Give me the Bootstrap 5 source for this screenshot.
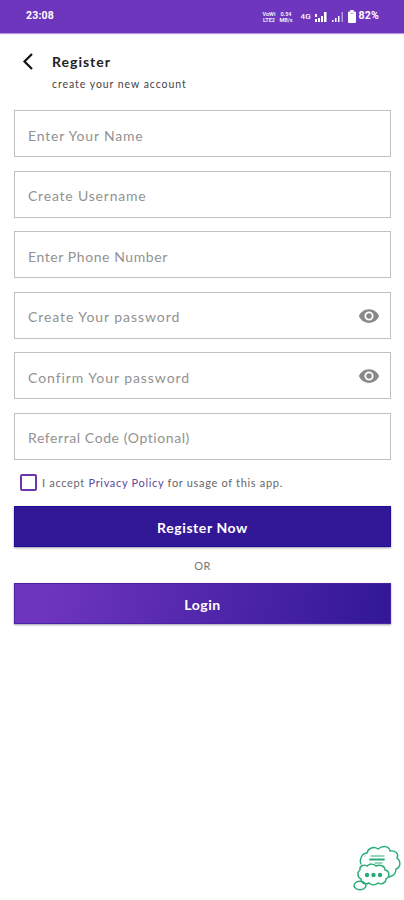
<!DOCTYPE html>
<html lang="en">
<head>
<meta charset="utf-8">
<meta name="viewport" content="width=device-width, initial-scale=1">
<title>Register</title>
<link href="https://cdn.jsdelivr.net/npm/bootstrap@5.3.0/dist/css/bootstrap.min.css" rel="stylesheet">
<style>
body { font-family: Lato, sans-serif; background: #fff; color: #222; }
.screen { height: 900px; }
.status { height: 33px; background: #6e35bd; box-shadow: 0 1px 1px #b79be0; color: #fff; font: 700 10.5px/1 Roboto, sans-serif; padding: 0 25px 0 26px; letter-spacing: .2px; }
.level { padding-left: 3px; }
.tiny { font-size: 5.5px; line-height: 6px; text-align: center; letter-spacing: 0; opacity: .9; }
.net { font-size: 8px; font-weight: 500; letter-spacing: 0; }
.head { height: 77px; padding: 19px 14px 0 22px; }
.titles { padding-left: 17px; }
.head h1 { font: 700 14px/20px Lato, sans-serif; letter-spacing: 1px; }
.head p { font: 400 10.5px/15px Lato, sans-serif; letter-spacing: .95px; color: #444; padding-top: 5px; margin-left: -1px; }
.fields { padding: 0 13px 0 14px; gap: 13.5px; }
.entry { height: 47px; border: 1px solid #c0c0c0; }
.entry .form-control { font: 400 14px/20px Lato, sans-serif; letter-spacing: .8px; padding: 3px 13px 0; height: 45px; box-shadow: none; }
.entry .wide { letter-spacing: .93px; }
.entry .tight { letter-spacing: .58px; }
.entry .form-control::placeholder { color: #929292; opacity: 1; }
.entry svg { margin-right: 10px; margin-top: 1px; }
.terms { padding: 14px 20px 0; height: 46px; font: 400 11px/18px Lato, sans-serif; color: #666; }
.terms .form-check-input { width: 17px; height: 17px; border: 2px solid #6c35ae; border-radius: 2px; margin: 0 5px 0 0; }
.terms label { letter-spacing: .68px; }
.terms a { color: #5a4a9c; }
.actions { padding: 0 13px 0 14px; }
.action { height: 41px; border: 1px solid #1d0c91; box-shadow: 0 1px 2px #9a9aaa; font: 700 14px/20px Lato, sans-serif; color: #fff; letter-spacing: .58px; padding: 3px 0 0; }
.solid { background: #321897; }
.fade-x { background: linear-gradient(100deg, #6e35bd 8%, #321897 98%); border-color: #4a22a4; }
.or { height: 36px; font: 400 11px/38px Lato, sans-serif; letter-spacing: .4px; color: #777; }
.chat { margin: auto 3px 8px auto; }
</style>
<script src="https://cdn.jsdelivr.net/npm/bootstrap@5.3.0/dist/js/bootstrap.bundle.min.js"></script>
</head>
<body>
<svg class="d-none"><symbol id="eye" viewBox="0 0 24 24"><path fill="#888" d="M12 4.500C7 4.500 2.700 7.600 1 12c1.700 4.400 6 7.500 11 7.500s9.300-3.100 11-7.500C21.300 7.600 17 4.500 12 4.500zM12 17a5 5 0 1 1 0-10 5 5 0 0 1 0 10zm0-8a3 3 0 1 0 0 6 3 3 0 0 0 0-6z"/></symbol></svg>
<main class="screen d-flex flex-column">
  <div class="status d-flex align-items-center">
    <span>23:08</span>
    <div class="d-flex align-items-center ms-auto">
      <span class="tiny">VoWi<br>LTE2</span>
      <span class="tiny ms-1">0.54<br>MB/s</span>
      <span class="net ms-2">4G</span>
      <svg class="ms-1" width="12" height="10" viewBox="0 0 12 10" fill="#fff"><path d="M0 7h2v3H0zM0 2h2v3H0zM3 6h2v4H3zM6 4h2v6H6zM9 0h2.500v10H9z"/></svg>
      <svg class="ms-1" width="13" height="10" viewBox="0 0 13 10" fill="#fff"><path d="M1 8h1.500v2H1zM4 6h1.500v4H4zM7 4h1.500v6H7z"/><path opacity=".5" d="M10.500 0H12v10h-1.500z"/></svg>
      <svg class="ms-1" width="8" height="13" viewBox="0 0 8 13" fill="#fff"><path d="M2.300 0h3.400v1.500H7q1 0 1 1V12q0 1-1 1H1q-1 0-1-1V2.500q0-1 1-1h1.300z"/><path d="M2.500 3.300h3" stroke="#b79be0"/></svg>
      <span class="level">82%</span>
    </div>
  </div>
  <header class="head d-flex">
    <svg width="13" height="19" viewBox="0 0 13 19" fill="none" stroke="#111" stroke-width="2.200"><path d="M10 2 2.500 9.500 10 17"/></svg>
    <div class="titles">
      <h1 class="m-0">Register</h1>
      <p class="m-0">create your new account</p>
    </div>
  </header>
  <form class="fields d-flex flex-column">
    <div class="entry d-flex align-items-center"><input class="form-control border-0 rounded-0 bg-transparent" placeholder="Enter Your Name"></div>
    <div class="entry d-flex align-items-center"><input class="form-control border-0 rounded-0 bg-transparent" placeholder="Create Username"></div>
    <div class="entry d-flex align-items-center"><input class="form-control tight border-0 rounded-0 bg-transparent" placeholder="Enter Phone Number"></div>
    <div class="entry d-flex align-items-center"><input type="password" class="form-control wide border-0 rounded-0 bg-transparent" placeholder="Create Your password"><svg class="flex-shrink-0" width="22" height="22"><use href="#eye"/></svg></div>
    <div class="entry d-flex align-items-center"><input type="password" class="form-control wide border-0 rounded-0 bg-transparent" placeholder="Confirm Your password"><svg class="flex-shrink-0" width="22" height="22"><use href="#eye"/></svg></div>
    <div class="entry d-flex align-items-center"><input class="form-control tight border-0 rounded-0 bg-transparent" placeholder="Referral Code (Optional)"></div>
  </form>
  <div class="terms d-flex align-items-start">
    <input class="form-check-input flex-shrink-0" type="checkbox" id="accept">
    <label for="accept">I accept <a href="#" class="text-decoration-none">Privacy Policy</a> for usage of this app.</label>
  </div>
  <div class="actions d-flex flex-column">
    <button class="action solid btn rounded-0 w-100">Register Now</button>
    <div class="or text-center">OR</div>
    <button class="action fade-x btn rounded-0 w-100">Login</button>
  </div>
  <svg class="chat" width="48" height="48" viewBox="0 0 48 48" fill="none" stroke="#28ac75" stroke-width="1.400" stroke-linecap="round">
    <path d="M8 20C6 16 9 9 14 9c1-5 7-7 11-4 5-4 11-3 12 2 6-1 9 3 7 7 4 3 4 9-1 11 0 5-3 7-7 8"/>
    <path d="M8 35c-4-2-4-7-1-9-1-4 4-6 7-4 3-3 7-2 9 0 4-2 9 0 9 4 5 1 5 7 1 9 0 4-5 6-8 4-3 3-7 2-9 0-4 2-8 0-8-4z"/>
    <ellipse cx="7" cy="41.500" rx="6" ry="4.300"/>
    <path d="M18 12h13M22 19h7" stroke-width="1"/><path d="M17 15.500h14" stroke-width="1.800"/><path d="M12 12h.1M17 19h.1" stroke-width="1"/>
    <g fill="#28ac75" stroke="none"><circle cx="14" cy="31" r="2.200"/><circle cx="20.500" cy="31" r="2.200"/><circle cx="27" cy="31" r="2.200"/></g>
  </svg>
</main>
</body>
</html>
